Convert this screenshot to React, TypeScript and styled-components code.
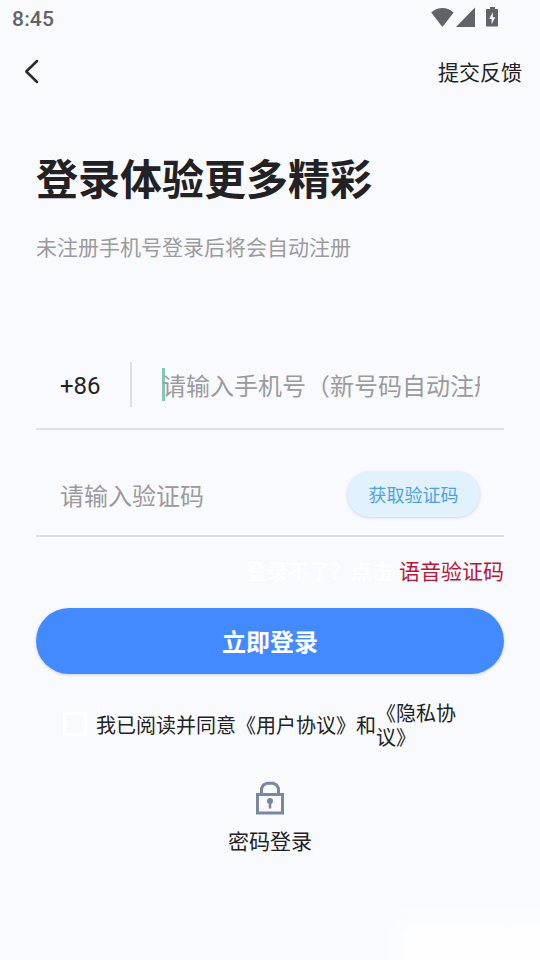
import React from 'react';
import styled, { createGlobalStyle } from 'styled-components';

const GlobalStyle = createGlobalStyle`
  * { box-sizing: border-box; }
  body {
    margin: 0;
    background: #f9fafe;
    color: #222224;
    font-family: Roboto, "Noto Sans CJK SC", sans-serif;
  }
  button, input { font: inherit; border: 0; padding: 0; background: none; color: inherit; }
`;

const Screen = styled.div`
  position: relative;
  display: flex;
  flex-direction: column;
  width: 540px;
  height: 960px;
  overflow: hidden;
  background: #f9fafe;
`;

const StatusBar = styled.header`
  display: flex;
  align-items: center;
  justify-content: space-between;
  height: 36px;
  padding: 2px 42px 0 12px;
  color: #626366;
`;

const Clock = styled.span`
  font-size: 21px;
  line-height: 24px;
  font-weight: 500;
  letter-spacing: 0.2px;
`;

const StatusIcons = styled.svg`
  width: 68px;
  height: 22px;
  margin-top: -2px;
  fill: #626366;
`;

const NavBar = styled.nav`
  display: flex;
  align-items: center;
  justify-content: space-between;
  height: 72px;
  padding: 0 18px 0 22px;
`;

const BackButton = styled.button`
  display: flex;
  width: 20px;
  height: 26px;
`;

const TextButton = styled.button`
  padding-top: 2px;
  font-size: 21px;
  line-height: 30px;
`;

const Content = styled.main`
  display: flex;
  flex-direction: column;
  padding: 0 36px;
`;

const Title = styled.h1`
  margin: 43px 0 0;
  font-size: 42px;
  line-height: 60px;
  font-weight: 700;
`;

const Subtitle = styled.p`
  margin: 22px 0 0;
  color: #9b9b9d;
  font-size: 21px;
  line-height: 30px;
`;

const Field = styled.div<{ $height: number }>`
  display: flex;
  align-items: center;
  height: ${(p) => p.$height}px;
  padding: 0 24px;
  border-bottom: 2px solid #dedfe2;
`;

const PhoneField = styled(Field)`
  margin-top: 77px;
`;

const CodeField = styled(Field)`
  padding-top: 23px;
`;

const CountryCode = styled.span`
  width: 70px;
  padding-top: 4px;
  font-size: 24px;
`;

const Divider = styled.span`
  width: 2px;
  height: 45px;
  margin-right: 30px;
  background: #dedfe2;
`;

const Caret = styled.span`
  width: 3px;
  height: 33px;
  margin-right: -3px;
  background: #84c7ba;
`;

const Placeholder = styled.span`
  flex: 1;
  min-width: 0;
  padding-top: 5px;
  overflow: hidden;
  white-space: nowrap;
  color: #9b9b9d;
  font-size: 24px;
  line-height: 36px;
`;

const CodeButton = styled.button`
  width: 133px;
  height: 46px;
  padding-top: 3px;
  border-radius: 23px;
  background: #e2f1fe;
  box-shadow: 0 1px 3px rgba(60, 80, 110, 0.22);
  color: #4da2e5;
  font-size: 18px;
  line-height: 26px;
`;

const VoiceRow = styled.div`
  display: flex;
  justify-content: flex-end;
  gap: 6px;
  margin-top: 20px;
  font-size: 21px;
  line-height: 30px;
`;

const VoiceHint = styled.span`
  color: #fff;
`;

const VoiceLink = styled.a`
  color: #b91536;
`;

const LoginButton = styled.button`
  height: 66px;
  margin-top: 21px;
  padding-top: 4px;
  border-radius: 33px;
  background: #438aff;
  box-shadow: 0 1px 3px rgba(60, 80, 110, 0.24);
  color: #fff;
  font-size: 24px;
  line-height: 36px;
  font-weight: 700;
`;

const Agreement = styled.div`
  display: flex;
  align-items: center;
  height: 48px;
  margin-top: 28px;
  padding-left: 27px;
  font-size: 20px;
  line-height: 24px;
`;

const Checkbox = styled.span`
  width: 24px;
  height: 24px;
  margin: -4px 9px 0 0;
  border: 3px solid #fff;
  border-radius: 2px;
`;

const PrivacyLink = styled.span`
  width: 82px;
  word-break: break-all;
  line-break: anywhere;
`;

const PasswordLogin = styled.button`
  display: flex;
  flex-direction: column;
  align-items: center;
  gap: 12px;
  margin-top: 31px;
  font-size: 21px;
  line-height: 30px;
`;

const Glow = styled.div`
  position: absolute;
  right: 0;
  bottom: 0;
  width: 154px;
  height: 50px;
  background:
    linear-gradient(to right, #f9fafe 0, rgba(249, 250, 254, 0) 22px),
    linear-gradient(to bottom, #fafbfe 0, #fefefe 28px);
`;

export default function App() {
  return (
    <Screen>
      <GlobalStyle />
      <StatusBar>
        <Clock>8:45</Clock>
        <StatusIcons viewBox="0 0 68 22">
          <path d="M1.2 5.4Q12.4-3.2 23.7 5.4L12.4 20Z" />
          <path d="M45 .5V20H26Z" />
          <path
            fillRule="evenodd"
            d="M60 0h5v2h2q1 0 1 1v15.500q0 1-1 1H57q-1 0-1-1V3q0-1 1-1h3ZM62.800 5.200 59.200 12h2.400v5.200L65.300 10.300h-2.500Z"
          />
        </StatusIcons>
      </StatusBar>
      <NavBar>
        <BackButton aria-label="返回">
          <svg width="20" height="26" viewBox="0 0 20 26" fill="none" stroke="#29292b" strokeWidth="2.500" strokeLinecap="round" strokeLinejoin="round">
            <path d="M15 2 4.300 12.500 15 23" />
          </svg>
        </BackButton>
        <TextButton>提交反馈</TextButton>
      </NavBar>
      <Content>
        <Title>登录体验更多精彩</Title>
        <Subtitle>未注册手机号登录后将会自动注册</Subtitle>
        <PhoneField $height={90}>
          <CountryCode>+86</CountryCode>
          <Divider />
          <Caret />
          <Placeholder>请输入手机号（新号码自动注册）</Placeholder>
        </PhoneField>
        <CodeField $height={107}>
          <Placeholder>请输入验证码</Placeholder>
          <CodeButton>获取验证码</CodeButton>
        </CodeField>
        <VoiceRow>
          <VoiceHint>登录不了？点击</VoiceHint>
          <VoiceLink>语音验证码</VoiceLink>
        </VoiceRow>
        <LoginButton>立即登录</LoginButton>
        <Agreement>
          <Checkbox />
          <span>我已阅读并同意《用户协议》和</span>
          <PrivacyLink>《隐私协议》</PrivacyLink>
        </Agreement>
        <PasswordLogin>
          <svg width="30" height="34" viewBox="0 0 30 34" fill="none" stroke="#7c879f" strokeWidth="3">
            <path d="M2.500 13.500h25v18.500h-25ZM6.500 13V7.500l2-3.500 3.500-1.800h6l3.500 1.800 2 3.500V13" />
            <circle cx="15" cy="20" r="3" fill="#7c879f" stroke="none" />
            <path d="M15 20v7.500" strokeWidth="2.600" />
          </svg>
          密码登录
        </PasswordLogin>
      </Content>
      <Glow />
    </Screen>
  );
}
